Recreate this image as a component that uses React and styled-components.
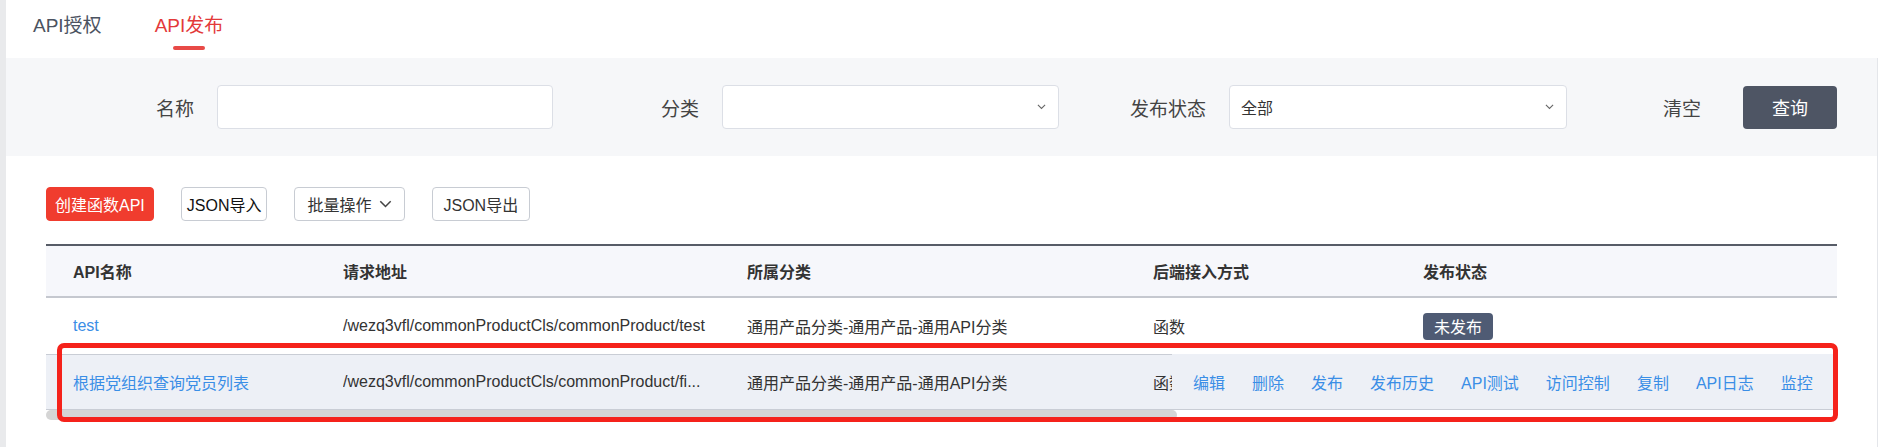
import React from 'react'
import styled, { createGlobalStyle } from 'styled-components'

const Global = createGlobalStyle`
  *{box-sizing:border-box}
  html,body{margin:0;background:#fff}
  body{font-family:"Liberation Sans","Noto Sans CJK SC",sans-serif;color:#333}
`

const Page = styled.div`
  display:flex;
  min-height:447px;
`

const Stripe = styled.div`
  width:6px; flex-shrink:0;
  background:#e9eaec;
`

const Main = styled.main`
  flex:1;
  display:flex; flex-direction:column;
  min-width:0;
`

const TabBar = styled.nav`
  height:58px;
  display:flex; gap:53px;
  padding-left:27px;
`

const Tab = styled.a`
  position:relative;
  padding-top:14px;
  font-size:19px; line-height:24px;
  color:${p => p.$active ? '#e3393a' : '#4b5361'};
  text-decoration:none;
  &::after{
    content:"";
    display:${p => p.$active ? 'block' : 'none'};
    position:absolute; top:46px; left:50%;
    width:32px; height:4px; margin-left:-16px;
    border-radius:2px;
    background:#e84a47;
  }
`

const FilterPanel = styled.section`
  height:98px;
  display:flex; align-items:center;
  padding:0 40px;
  background:#f6f7f9;
  border-right:1px solid #e4e6ea;
`

const FilterGrid = styled.div`
  display:grid;
  grid-template-columns:171px 336px 169px 337px 170px 338px;
  align-items:center;
`

const Label = styled.label`
  text-align:right;
  padding-right:23px;
  font-size:19px;
  color:#444;
`

const Field = styled.div`
  height:44px;
  display:flex; align-items:center; justify-content:space-between;
  padding:0 12px 0 11px;
  background:#fff;
  border:1px solid #dcdfe6;
  border-radius:4px;
  font-size:16px; color:#333;
`

const FilterActions = styled.div`
  margin-left:auto;
  display:flex; align-items:center; gap:42px;
`

const TextButton = styled.button`
  border:0; background:transparent; padding:0;
  font:inherit; font-size:19px; color:#444;
`

const QueryButton = styled.button`
  width:94px; height:43px;
  border:0; border-radius:4px;
  background:#4e5564; color:#fff;
  font:inherit; font-size:18px;
`

const Content = styled.section`
  flex:1;
  padding:31px 40px 0;
  border-right:1px solid #e4e6ea;
`

const Toolbar = styled.div`
  display:flex; gap:27px;
  margin-bottom:23px;
`

const ToolButton = styled.button`
  height:34px;
  display:inline-flex; align-items:center; gap:7px;
  padding:0 ${p => p.$pad || 10}px;
  border:1px solid ${p => p.$primary ? '#f03c2e' : '#c8ccd3'};
  border-radius:4px;
  background:${p => p.$primary ? '#f03c2e' : '#fff'};
  color:${p => p.$primary ? '#fff' : p.$dark ? '#111' : '#333'};
  font:inherit; font-size:16px;
`

const Table = styled.div`
  position:relative;
`

const Row = styled.div`
  position:relative;
  display:grid;
  grid-template-columns:270px 404px 406px 270px 1fr;
  align-items:center;
  height:${p => p.$head ? 54 : 56}px;
  padding-left:27px;
  font-size:16px;
  font-weight:${p => p.$head ? 700 : 400};
  color:#333;
  background:${p => p.$head ? '#f6f7fb' : p.$hover ? '#edf0f6' : '#fff'};
  border-top:${p => p.$head ? '2px solid #575c67' : p.$hover ? '1px solid #c9cdd5' : '0'};
  border-bottom:${p => p.$head ? '2px solid #c5c8cf' : p.$hover ? '1px solid #c9cdd5' : '0'};
`

const Cell = styled.div`
  white-space:nowrap; overflow:hidden;
  padding-right:16px;
  color:${p => p.$link ? '#3a8ee6' : 'inherit'};
`

const Tag = styled.span`
  display:inline-flex; align-items:center;
  height:27px; padding:0 11px;
  border-radius:4px;
  background:#4f5b74; color:#fff;
`

const RowActions = styled.div`
  position:absolute; top:-1px; bottom:0; left:1126px; right:0;
  display:flex; align-items:center; gap:27px;
  padding-left:21px;
  background:#edf0f6;
`

const ActionLink = styled.a`
  color:#3a8ee6; text-decoration:none;
`

const ScrollThumb = styled.div`
  width:1131px; height:10px;
  border-radius:5px;
  background:#d5d5d5;
`

const Highlight = styled.div`
  position:absolute; left:11px; top:99px;
  width:1781px; height:79px;
  border:5px solid #f5221b;
  border-radius:7px;
  pointer-events:none;
`

const Chevron = ({ size = 9, color = '#666' }) => (
  <svg width={size} height={size * 0.6} viewBox="0 0 10 6" fill="none">
    <path d="M1 1l4 4 4-4" stroke={color} strokeWidth="1.2" />
  </svg>
)

const actions = ['编辑', '删除', '发布', '发布历史', 'API测试', '访问控制', '复制', 'API日志', '监控']

export default function App() {
  return (
    <Page>
      <Global />
      <Stripe />
      <Main>
        <TabBar>
          <Tab href="#">API授权</Tab>
          <Tab href="#" $active>API发布</Tab>
        </TabBar>

        <FilterPanel>
          <FilterGrid>
            <Label>名称</Label>
            <Field />
            <Label>分类</Label>
            <Field><span /><Chevron /></Field>
            <Label>发布状态</Label>
            <Field><span>全部</span><Chevron /></Field>
          </FilterGrid>
          <FilterActions>
            <TextButton>清空</TextButton>
            <QueryButton>查询</QueryButton>
          </FilterActions>
        </FilterPanel>

        <Content>
          <Toolbar>
            <ToolButton $primary $pad={8}>创建函数API</ToolButton>
            <ToolButton $dark $pad={5}>JSON导入</ToolButton>
            <ToolButton $pad={12}>批量操作 <Chevron size={13} color="#444" /></ToolButton>
            <ToolButton $pad={11}>JSON导出</ToolButton>
          </Toolbar>

          <Table>
            <Row $head>
              <Cell>API名称</Cell>
              <Cell>请求地址</Cell>
              <Cell>所属分类</Cell>
              <Cell>后端接入方式</Cell>
              <Cell>发布状态</Cell>
            </Row>
            <Row>
              <Cell $link>test</Cell>
              <Cell>/wezq3vfl/commonProductCls/commonProduct/test</Cell>
              <Cell>通用产品分类-通用产品-通用API分类</Cell>
              <Cell>函数</Cell>
              <Cell><Tag>未发布</Tag></Cell>
            </Row>
            <Row $hover>
              <Cell $link>根据党组织查询党员列表</Cell>
              <Cell>/wezq3vfl/commonProductCls/commonProduct/fi...</Cell>
              <Cell>通用产品分类-通用产品-通用API分类</Cell>
              <Cell>函数</Cell>
              <Cell />
              <RowActions>
                {actions.map(a => <ActionLink key={a} href="#">{a}</ActionLink>)}
              </RowActions>
            </Row>
            <ScrollThumb />
            <Highlight />
          </Table>
        </Content>
      </Main>
    </Page>
  )
}
